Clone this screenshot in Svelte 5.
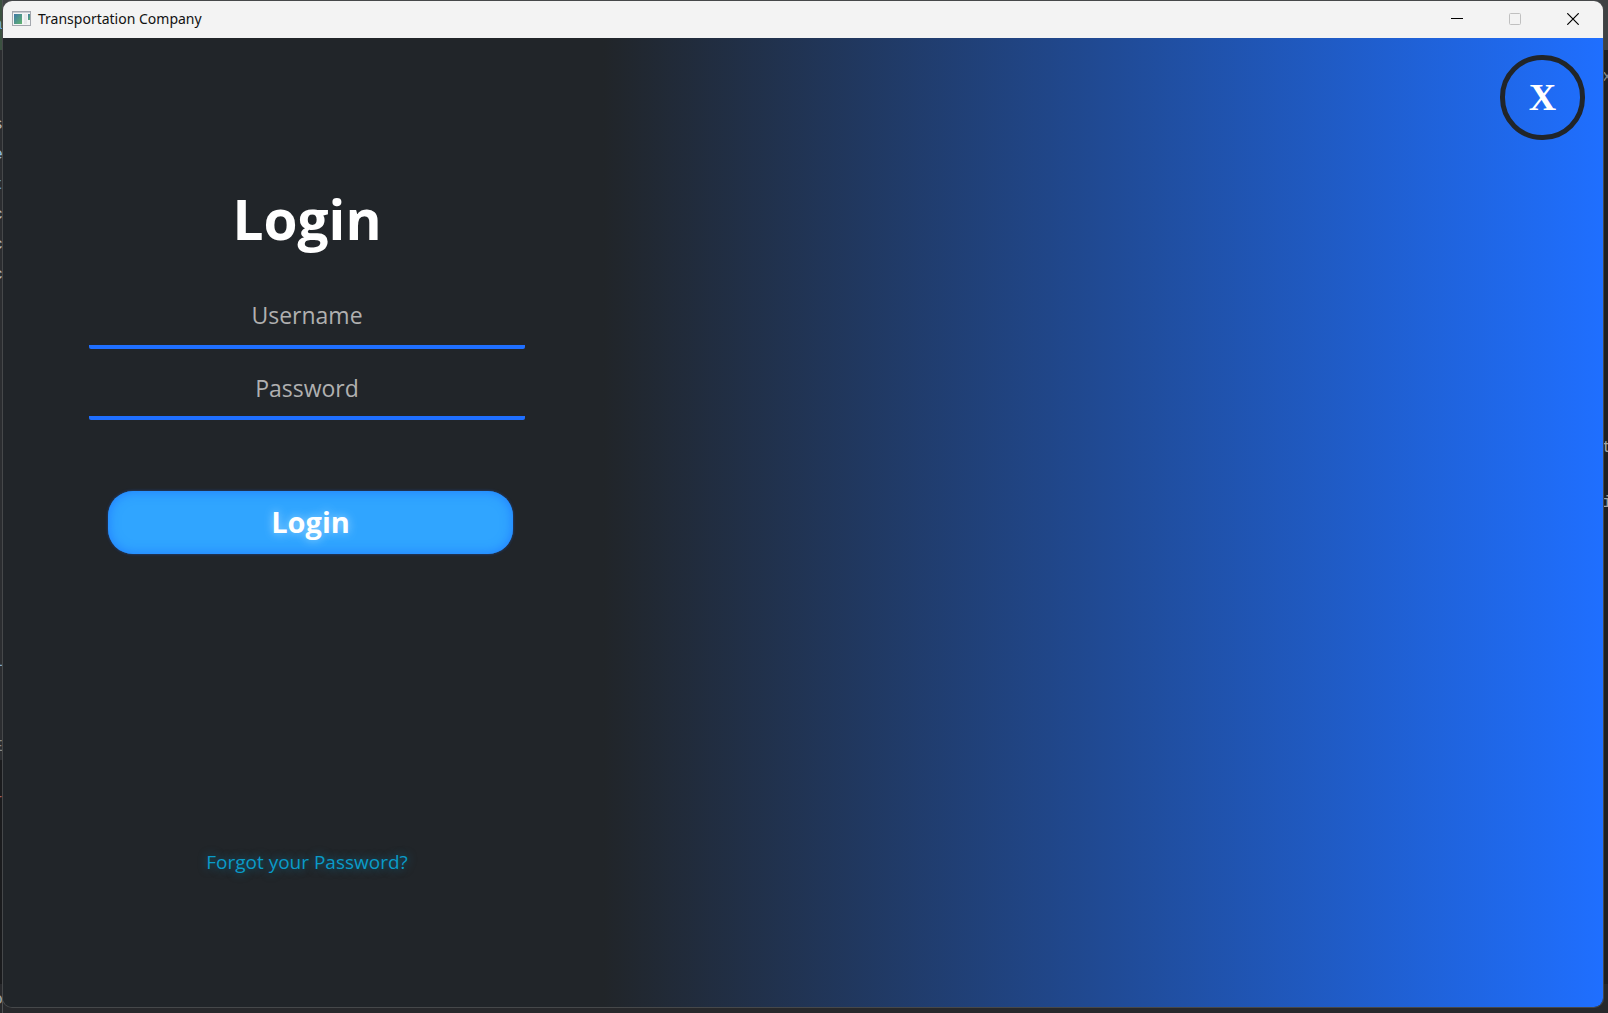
<script>
  let username = $state('');
  let password = $state('');

  const leftGlyphs = [
    { char: 'a', top: 14, color: '#6fa8d8' },
    { char: 's', top: 114, color: '#b4b7bb' },
    { char: 'e', top: 144, color: '#8fbbe0' },
    { char: 't', top: 174, color: '#5f96d0' },
    { char: 'c', top: 204, color: '#b4b7bb' },
    { char: 'c', top: 234, color: '#b4b7bb' },
    { char: 'c', top: 264, color: '#b4b7bb' },
    { char: 'l', top: 651, color: '#7fa6cf' },
    { char: 'E', top: 736, color: '#85888c' },
    { char: 'r', top: 790, color: '#a06060' },
    { char: 'o', top: 989, color: '#a0a3a6' }
  ];
  const rightGlyphs = [
    { char: 'x', top: 66, color: '#85888c' },
    { char: 't', top: 437, color: '#a0a3a6' },
    { char: 'i', top: 492, color: '#a0a3a6' }
  ];
</script>

<div class="desktop">
  <div class="strip left" aria-hidden="true">
    {#each leftGlyphs as g}
      <span style="top: {g.top}px; color: {g.color}">{g.char}</span>
    {/each}
  </div>
  <div class="strip right" aria-hidden="true">
    {#each rightGlyphs as g}
      <span style="top: {g.top}px; color: {g.color}">{g.char}</span>
    {/each}
  </div>

  <div class="window">
    <header class="titlebar">
      <svg class="app-icon" width="20" height="16" viewBox="0 0 20 16" aria-hidden="true">
        <defs>
          <linearGradient id="pane" x1="0" y1="0" x2="1" y2="1">
            <stop offset="0" stop-color="#3f78a8" />
            <stop offset="1" stop-color="#62b56f" />
          </linearGradient>
        </defs>
        <rect x="0.5" y="0.5" width="18" height="14" fill="#f4f5f6" stroke="#a3a7ae" />
        <path d="M1 1.5h17" stroke="#c9ccd2" />
        <rect x="2" y="3" width="8" height="10" fill="url(#pane)" />
        <rect x="12" y="3" width="3" height="10" fill="#e6e8ea" />
        <rect x="16" y="3" width="2" height="6" fill="url(#pane)" />
      </svg>
      <span class="title">Transportation Company</span>
      <div class="controls">
        <button type="button" aria-label="Minimize">
          <svg width="12" height="12" viewBox="0 0 12 12"><path d="M0 5.5h12" stroke="#000" /></svg>
        </button>
        <button type="button" aria-label="Maximize" disabled>
          <svg width="12" height="12" viewBox="0 0 12 12"><rect x="0.5" y="0.5" width="11" height="11" rx="1" fill="none" stroke="#c0c0c0" /></svg>
        </button>
        <button type="button" aria-label="Close window">
          <svg width="12" height="12" viewBox="0 0 12 12"><path d="M0.3 0.3l11.4 11.4M11.7 0.3L0.3 11.7" stroke="#000" stroke-width="1.2" /></svg>
        </button>
      </div>
    </header>

    <main class="content">
      <form class="login" onsubmit={(e) => e.preventDefault()}>
        <h1>Login</h1>
        <input class="username" type="text" placeholder="Username" aria-label="Username" bind:value={username} />
        <input class="password" type="password" placeholder="Password" aria-label="Password" bind:value={password} />
        <button class="submit" type="submit">Login</button>
        <a class="forgot" href="#forgot">Forgot your Password?</a>
      </form>
      <section class="cover">
        <button class="exit" type="button">X</button>
      </section>
    </main>
  </div>
</div>

<style>
  :global(body) {
    margin: 0;
    background: #1e1f22;
  }

  .desktop {
    position: relative;
    box-sizing: border-box;
    display: flex;
    min-height: 100vh;
    padding: 1px 5px 6px 3px;
    overflow: hidden;
    background: linear-gradient(#3f4244 0, #3f4244 50px, #1e1f22 50px, #1e1f22 984px, #27282b 984px);
    font-family: "Open Sans", "Noto Sans", sans-serif;
  }

  .strip {
    position: absolute;
    top: 0;
    bottom: 0;
    overflow: hidden;
    font: 17px/22px "Liberation Mono", monospace;
  }

  .strip.left {
    left: 0;
    width: 3px;
    border-right: 1px solid #505254;
    box-sizing: border-box;
    background: linear-gradient(#3b5140 50px, #2b2d30 50px, #2b2d30 760px, #1a1b1d 760px, #1a1b1d 984px, #27282b 984px);
  }

  .strip.right {
    right: 0;
    width: 5px;
  }

  .strip span {
    position: absolute;
  }

  .strip.left span {
    right: -1px;
  }

  .strip.right span {
    left: -1px;
  }

  .window {
    position: relative;
    flex: 1;
    display: flex;
    flex-direction: column;
    border-radius: 9px;
    overflow: hidden;
    box-shadow: 0 0 0 1px #46484a;
  }

  .titlebar {
    display: flex;
    align-items: center;
    box-sizing: border-box;
    height: 37px;
    padding: 0 1px 1px 9px;
    background: #f3f3f3;
  }

  .title {
    margin-left: 6px;
    font: 14px/20px "Noto Sans", sans-serif;
    color: #111;
  }

  .controls {
    display: flex;
    align-self: stretch;
    margin-left: auto;
  }

  .controls button {
    display: flex;
    align-items: center;
    justify-content: center;
    width: 58px;
    padding: 0;
    border: 0;
    background: none;
  }

  .content {
    flex: 1;
    display: flex;
    background: #212529;
  }

  .login {
    flex: 0 0 600px;
    box-sizing: border-box;
    display: flex;
    flex-direction: column;
    align-items: center;
    padding: 143px 78px 0 86px;
  }

  h1 {
    margin: 0;
    font-size: 55px;
    line-height: 76px;
    font-weight: 700;
    color: #fff;
  }

  input {
    box-sizing: border-box;
    width: 100%;
    padding: 0;
    border: 0;
    border-bottom: 4px solid #1f6fff;
    border-radius: 2px;
    outline: 0;
    background: none;
    font: 23px/36px "Open Sans", sans-serif;
    text-align: center;
    color: #fff;
  }

  input::placeholder {
    color: #b0b0b0;
    opacity: 1;
  }

  .username {
    height: 61px;
    margin-top: 31px;
    padding-bottom: 4px;
  }

  .password {
    height: 60px;
    margin-top: 11px;
  }

  .submit {
    align-self: stretch;
    height: 63px;
    margin: 71px 12px 0 19px;
    padding: 0 0 2px;
    border: 0;
    border-radius: 25px;
    background: #30a5ff;
    box-shadow: inset 0 0 12px #1f7cff, 0 0 3px rgba(31, 111, 255, 0.5);
    font: 700 29px/40px "Open Sans", sans-serif;
    color: #fff;
    text-shadow: 0 0 10px #9bd8ff;
  }

  .forgot {
    margin-top: 294px;
    font-size: 19px;
    line-height: 28px;
    color: #0a9bc9;
    text-decoration: none;
    text-shadow: 0 0 10px rgba(10, 155, 201, 0.6);
  }

  .cover {
    flex: 1;
    display: flex;
    justify-content: flex-end;
    align-items: flex-start;
    padding: 17px 18px 0 0;
    background: linear-gradient(to right, #212529, #1f6fff);
  }

  .exit {
    width: 85px;
    height: 85px;
    padding: 0 0 2px;
    border: 5px solid #212529;
    border-radius: 42px;
    background: none;
    font: 700 38px/44px "Liberation Serif", serif;
    color: #fff;
  }
</style>
